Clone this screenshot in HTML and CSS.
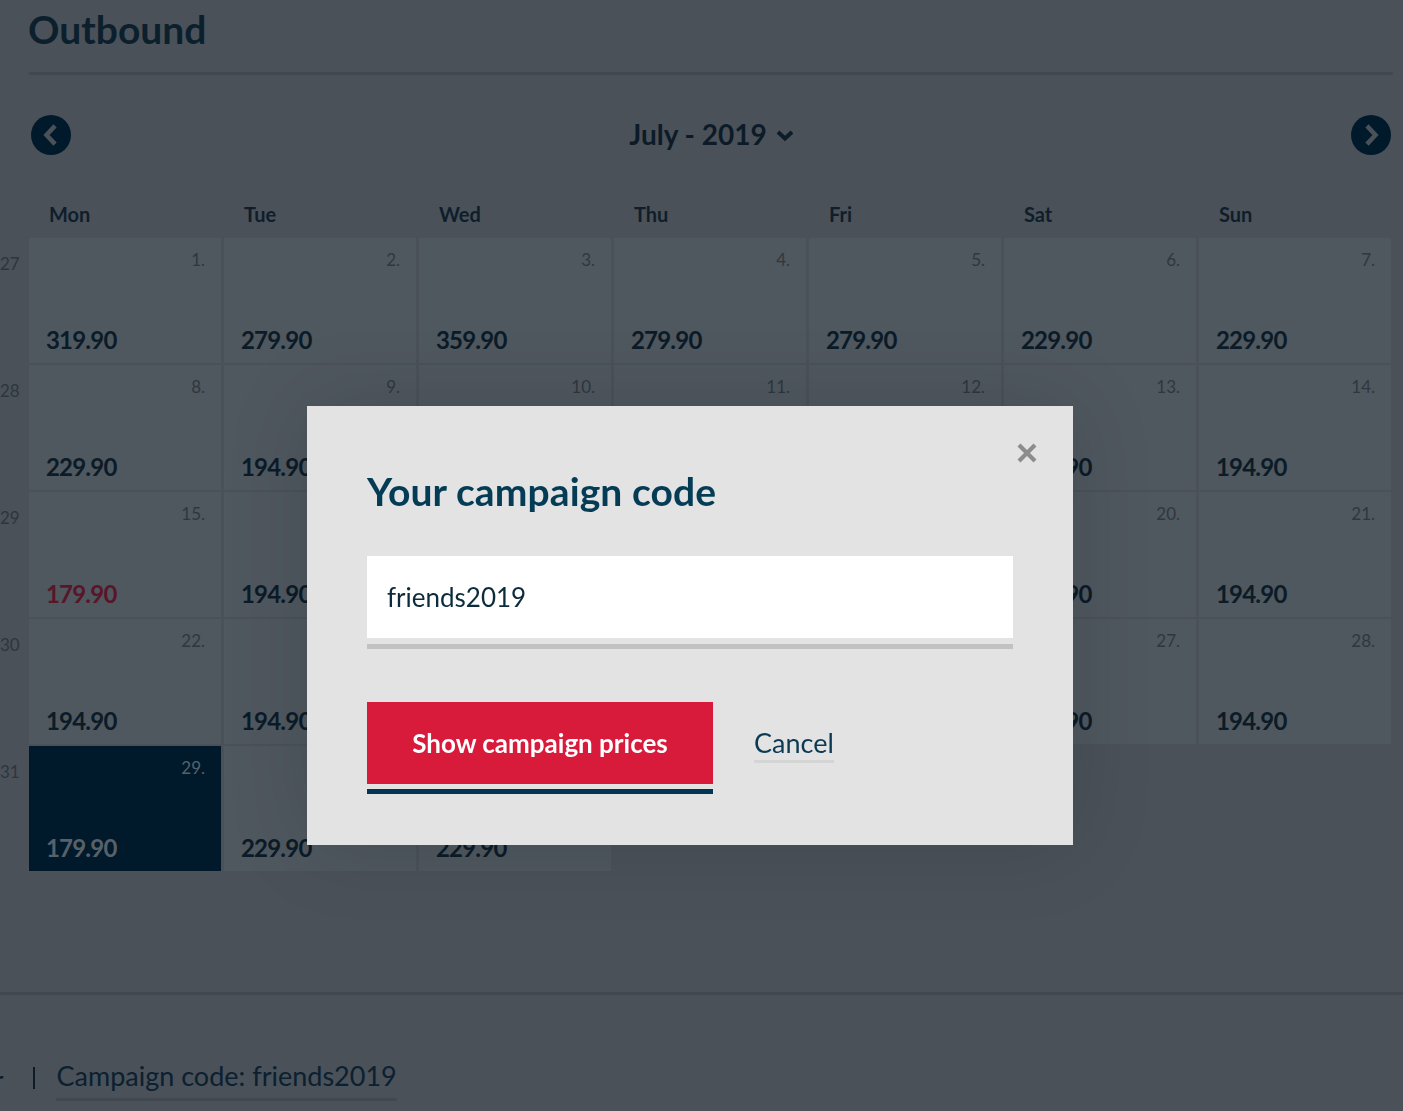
FILE: index.html
```html
<!DOCTYPE html>
<html lang="en">
<head>
<meta charset="utf-8">
<title>Outbound</title>
<link rel="stylesheet" href="styles.css">
</head>
<body>
<div class="page">
  <h1 class="title">Outbound</h1>
  <div class="rule"></div>
  <div class="nav">
    <button class="circle" aria-label="Previous month">
      <svg width="40" height="40" viewBox="0 0 40 40"><path d="M22.5 12.5 L15.5 20 L22.5 27.5" fill="none" stroke="#4a5159" stroke-width="4.5" stroke-linecap="square" stroke-linejoin="miter"/></svg>
    </button>
    <div class="month">July - 2019
      <svg class="caret" width="20" height="14" viewBox="0 0 20 14"><path d="M3 4 L10 10.5 L17 4" fill="none" stroke="#0d1c28" stroke-width="4" stroke-linejoin="miter"/></svg>
    </div>
    <button class="circle" aria-label="Next month">
      <svg width="40" height="40" viewBox="0 0 40 40"><path d="M17.5 12.5 L24.5 20 L17.5 27.5" fill="none" stroke="#4a5159" stroke-width="4.5" stroke-linecap="square" stroke-linejoin="miter"/></svg>
    </button>
  </div>

  <div class="grid">
    <div class="wk"></div>
    <div class="dow">Mon</div><div class="dow">Tue</div><div class="dow">Wed</div><div class="dow">Thu</div><div class="dow">Fri</div><div class="dow">Sat</div><div class="dow">Sun</div>

    <div class="wk">27</div>
    <div class="cell"><span class="num">1.</span><span class="price">319.90</span></div>
    <div class="cell"><span class="num">2.</span><span class="price">279.90</span></div>
    <div class="cell"><span class="num">3.</span><span class="price">359.90</span></div>
    <div class="cell"><span class="num">4.</span><span class="price">279.90</span></div>
    <div class="cell"><span class="num">5.</span><span class="price">279.90</span></div>
    <div class="cell"><span class="num">6.</span><span class="price">229.90</span></div>
    <div class="cell"><span class="num">7.</span><span class="price">229.90</span></div>

    <div class="wk">28</div>
    <div class="cell"><span class="num">8.</span><span class="price">229.90</span></div>
    <div class="cell"><span class="num">9.</span><span class="price">194.90</span></div>
    <div class="cell"><span class="num">10.</span><span class="price">194.90</span></div>
    <div class="cell"><span class="num">11.</span><span class="price">194.90</span></div>
    <div class="cell"><span class="num">12.</span><span class="price">194.90</span></div>
    <div class="cell"><span class="num">13.</span><span class="price">194.90</span></div>
    <div class="cell"><span class="num">14.</span><span class="price">194.90</span></div>

    <div class="wk">29</div>
    <div class="cell"><span class="num">15.</span><span class="price low">179.90</span></div>
    <div class="cell"><span class="num">16.</span><span class="price">194.90</span></div>
    <div class="cell"><span class="num">17.</span><span class="price">194.90</span></div>
    <div class="cell"><span class="num">18.</span><span class="price">194.90</span></div>
    <div class="cell"><span class="num">19.</span><span class="price">194.90</span></div>
    <div class="cell"><span class="num">20.</span><span class="price">194.90</span></div>
    <div class="cell"><span class="num">21.</span><span class="price">194.90</span></div>

    <div class="wk">30</div>
    <div class="cell"><span class="num">22.</span><span class="price">194.90</span></div>
    <div class="cell"><span class="num">23.</span><span class="price">194.90</span></div>
    <div class="cell"><span class="num">24.</span><span class="price">194.90</span></div>
    <div class="cell"><span class="num">25.</span><span class="price">194.90</span></div>
    <div class="cell"><span class="num">26.</span><span class="price">194.90</span></div>
    <div class="cell"><span class="num">27.</span><span class="price">194.90</span></div>
    <div class="cell"><span class="num">28.</span><span class="price">194.90</span></div>

    <div class="wk">31</div>
    <div class="cell selected"><span class="num">29.</span><span class="price">179.90</span></div>
    <div class="cell"><span class="num">30.</span><span class="price">229.90</span></div>
    <div class="cell"><span class="num">31.</span><span class="price">229.90</span></div>
  </div>
</div>

<footer class="footer">
  <div class="footer-row">
    <span class="clip">Filter</span>
    <span class="sep"></span>
    <span class="code-link">Campaign code: friends2019</span>
  </div>
</footer>

<div class="modal">
  <button class="close" aria-label="Close">
    <svg width="22" height="22" viewBox="0 0 22 22"><path d="M3 3 L19 19 M19 3 L3 19" stroke="#8c8c8c" stroke-width="4.2"/></svg>
  </button>
  <h2 class="modal-title">Your campaign code</h2>
  <div class="field">
    <div class="input">friends2019</div>
  </div>
  <div class="actions">
    <button class="primary">Show campaign prices</button>
    <button class="cancel">Cancel</button>
  </div>
</div>
</body>
</html>
```

FILE: styles.css
```css
* { box-sizing: border-box; }

html, body {
  margin: 0;
  padding: 0;
  height: 100%;
  overflow: hidden;
}

body {
  background: #4a5159;
  font-family: Lato, "Liberation Sans", sans-serif;
  color: #0d1c28;
}

.page {
  padding: 0 10px 0 29px;
}

.title {
  margin: 0;
  padding-top: 6px;
  font-size: 39px;
  line-height: 46px;
  font-weight: 700;
  color: #0c1f2d;
  letter-spacing: 0;
  margin-left: -1px;
}

.rule {
  margin-top: 20px;
  height: 3px;
  background: #41484f;
}

.nav {
  display: flex;
  align-items: center;
  justify-content: space-between;
  margin-top: 40px;
  height: 40px;
  padding-left: 2px;
  padding-right: 2px;
}

.circle {
  width: 40px;
  height: 40px;
  border-radius: 50%;
  border: 0;
  padding: 0;
  background: #011a2b;
  display: flex;
  align-items: center;
  justify-content: center;
}

.month {
  display: flex;
  align-items: center;
  gap: 8px;
  font-size: 28px;
  font-weight: 700;
  color: #0c1b27;
  margin-left: 2px;
  margin-top: -2px;
}

.caret { margin-top: 2px; }

.grid {
  margin-left: -29px;
  margin-top: 43px;
  display: grid;
  grid-template-columns: 26px repeat(7, 192px);
  grid-auto-rows: 125px;
  grid-template-rows: 38px;
  column-gap: 3px;
  row-gap: 2px;
}

.dow {
  font-size: 20px;
  font-weight: 700;
  color: #0f1e2a;
  padding-left: 20px;
  line-height: 24px;
  padding-top: 4px;
}

.wk {
  text-align: right;
  padding-right: 9px;
  padding-top: 14px;
  font-size: 17px;
  line-height: 24px;
  color: #2e363d;
}

.cell {
  background: #4f575f;
  display: flex;
  flex-direction: column;
  justify-content: space-between;
  padding: 12px 16px 8px 17px;
}

.num {
  align-self: flex-end;
  font-size: 17px;
  line-height: 20px;
  color: #2f373e;
}

.price {
  font-size: 24px;
  line-height: 30px;
  font-weight: 700;
  color: #0b1b27;
  letter-spacing: -0.8px;
}

.price.low { color: #581628; }

.cell.selected { background: #001a2b; }
.cell.selected .num,
.cell.selected .price { color: #58616a; }

.footer {
  margin-top: 121px;
  border-top: 3px solid #41484f;
}

.footer-row {
  display: flex;
  align-items: center;
  padding-top: 64px;
}

.clip {
  font-size: 26px;
  color: #0b1d2b;
  white-space: nowrap;
  margin-left: -56px;
}

.sep {
  width: 2px;
  height: 22px;
  background: #0b1d2b;
  margin-left: 30px;
  margin-right: 21px;
  margin-top: -4px;
}

.code-link {
  font-size: 27px;
  color: #0b2030;
  line-height: 34px;
  padding-bottom: 5px;
  border-bottom: 3px solid #41484f;
}

.modal {
  position: fixed;
  left: 307px;
  top: 406px;
  width: 766px;
  height: 439px;
  background: #e3e3e3;
  padding: 61px 60px 0 60px;
  box-shadow: 0 0 80px rgba(0, 0, 0, 0.12);
}

.close {
  position: absolute;
  top: 36px;
  right: 35px;
  width: 22px;
  height: 22px;
  border: 0;
  padding: 0;
  background: transparent;
}

.modal-title {
  margin: 0;
  font-size: 39px;
  line-height: 48px;
  font-weight: 700;
  color: #033c54;
  letter-spacing: 0.1px;
}

.field {
  margin-top: 41px;
}

.input {
  background: #ffffff;
  height: 88px;
  padding: 0 20px;
  display: flex;
  align-items: center;
  font-size: 26px;
  color: #0c2b3b;
  border-bottom: 6px solid #e3e3e3;
  box-shadow: 0 5px 0 #c2c2c2;
}

.actions {
  display: flex;
  align-items: flex-start;
  margin-top: 58px;
  gap: 41px;
}

.primary {
  font-family: inherit;
  background: #d81a3b;
  color: #ffffff;
  border: 0;
  width: 346px;
  height: 82px;
  font-size: 26px;
  font-weight: 700;
  padding: 0;
  box-shadow: 0 5px 0 #e3e3e3, 0 10px 0 #033554;
}

.cancel {
  font-family: inherit;
  background: transparent;
  border: 0;
  padding: 25px 0 1px 0;
  font-size: 27px;
  color: #0b3a52;
  line-height: 32px;
  border-bottom: 3px solid #d5d5d5;
}
```
